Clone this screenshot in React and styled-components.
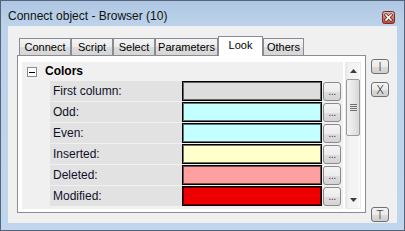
import React from 'react';
import styled, { createGlobalStyle } from 'styled-components';

const Global = createGlobalStyle`
  html, body { margin: 0; padding: 0; }
  body {
    width: 405px; height: 231px; overflow: hidden;
    font-family: "Liberation Sans", Arial, sans-serif;
    background: #fff;
  }
`;

const Window = styled.div`
  width: 405px;
  height: 231px;
  box-sizing: border-box;
  border: 1px solid #56647a;
  background: linear-gradient(180deg, #adc6e2 0px, #bcd2ea 22px, #c0d6ec 100%);
  display: flex;
  flex-direction: column;
  padding: 0 7px 7px 7px;
`;

const TitleBar = styled.div`
  height: 25px;
  box-sizing: border-box;
  padding-top: 5px;
  display: flex;
  align-items: center;
  justify-content: space-between;
`;

const Title = styled.span`
  font-family: "Liberation Sans", Arial, sans-serif;
  font-size: 12px;
  color: #111;
`;

const CloseBox = styled.div`
  width: 13px;
  height: 13px;
  margin-right: 2px;
  margin-top: 2px;
  display: flex;
`;

const Client = styled.div`
  flex: 1;
  background: #f0f0f0;
  display: flex;
  padding: 10px 0 0 9px;
  box-sizing: border-box;
`;

const LeftCol = styled.div`
  width: 349px;
  display: flex;
  flex-direction: column;
`;

const TabStrip = styled.div`
  height: 19px;
  display: flex;
  align-items: flex-end;
  padding-left: 2px;
  position: relative;
  z-index: 2;
`;

const Tab = styled.div`
  width: ${p => p.$w}px;
  height: ${p => (p.$active ? 20 : 17)}px;
  margin-bottom: ${p => (p.$active ? -1 : 0)}px;
  box-sizing: border-box;
  border: 1px solid #898c95;
  border-bottom: none;
  background: ${p => (p.$active ? '#fff' : 'linear-gradient(180deg, #f3f3f3 0%, #ebebeb 50%, #dcdcdc 51%, #d6d6d6 100%)')};
  font-size: 11px;
  color: #000;
  display: flex;
  justify-content: center;
  align-items: ${p => (p.$active ? 'flex-start' : 'center')};
  padding-top: ${p => (p.$active ? 2 : 0)}px;
`;

const Panel = styled.div`
  height: 158px;
  box-sizing: border-box;
  border: 1px solid #898c95;
  background: #fff;
  padding: 6px 4px 3px 4px;
  display: flex;
`;

const PropList = styled.div`
  flex: 1;
  background: #f0f0f0;
  display: flex;
  flex-direction: column;
`;

const Header = styled.div`
  height: 18px;
  display: flex;
  align-items: center;
  padding-left: 5px;
`;

const MinusBox = styled.div`
  width: 10px;
  height: 10px;
  box-sizing: border-box;
  border: 1px solid #8c8c8c;
  background: #fff;
  display: flex;
  align-items: center;
  justify-content: center;
  margin-right: 8px;
  margin-top: 2px;
  &::after {
    content: '';
    width: 6px;
    height: 1px;
    background: #000;
  }
`;

const HeaderText = styled.span`
  font-weight: bold;
  font-size: 12px;
  color: #000;
`;

const Row = styled.div`
  height: 20px;
  margin-top: 1px;
  display: flex;
  align-items: stretch;
  padding-left: 28px;
`;

const Label = styled.div`
  width: 132px;
  box-sizing: border-box;
  background: #e2e2e2;
  font-size: 12px;
  color: #10102a;
  padding-left: 3px;
  display: flex;
  align-items: center;
`;

const Swatch = styled.div`
  width: 140px;
  box-sizing: border-box;
  border: 1px solid #000;
  box-shadow: inset 0 0 0 1px rgba(0, 0, 0, 0.55);
  background: ${p => p.$color};
`;

const DotButton = styled.div`
  width: 18px;
  height: 19px;
  margin-left: 1px;
  align-self: center;
  box-sizing: border-box;
  border: 1px solid #8a8a8a;
  border-radius: 3px;
  background: linear-gradient(180deg, #f4f4f4 0%, #ececec 50%, #dedede 51%, #d4d4d4 100%);
  display: flex;
  justify-content: center;
  align-items: flex-end;
  font-size: 11px;
  line-height: 11px;
  letter-spacing: -0.5px;
  color: #6a2a6a;
  padding-bottom: 3px;
`;

const Scrollbar = styled.div`
  width: 16px;
  margin-left: 2px;
  box-sizing: border-box;
  background: linear-gradient(90deg, #e6e6e6 0%, #f3f3f3 20%, #f3f3f3 80%, #fcfcfc 100%);
  border: 1px solid #eaeaea;
  display: flex;
  flex-direction: column;
`;

const ArrowBtn = styled.div`
  height: 16px;
  display: flex;
  align-items: center;
  justify-content: center;
`;

const Thumb = styled.div`
  height: 57px;
  box-sizing: border-box;
  border: 1px solid #9a9a9a;
  border-radius: 2px;
  background: linear-gradient(90deg, #f2f2f2 0%, #e8e8e8 50%, #d8d8d8 100%);
  display: flex;
  align-items: center;
  justify-content: center;
`;

const Track = styled.div`
  flex: 1;
`;

const RightCol = styled.div`
  width: 18px;
  margin-left: 5px;
  display: flex;
  flex-direction: column;
  padding-top: 23px;
  padding-bottom: 1px;
  box-sizing: border-box;
  gap: 8px;
`;

const SideButton = styled.div`
  width: 18px;
  height: 15px;
  box-sizing: border-box;
  border: 1px solid #707070;
  border-radius: 3px;
  background: linear-gradient(180deg, #f2f2f2 0%, #ebebeb 50%, #dddddd 51%, #cfcfcf 100%);
  display: flex;
  align-items: center;
  justify-content: center;
  font-family: "DejaVu Sans", sans-serif;
  font-size: 12px;
  font-weight: 200;
  color: #000;
  margin-top: ${p => (p.$bottom ? 'auto' : '0')};
`;

const tabs = [
  { t: 'Connect', w: 52 },
  { t: 'Script', w: 42 },
  { t: 'Select', w: 42 },
  { t: 'Parameters', w: 63 },
  { t: 'Look', w: 45, active: true },
  { t: 'Others', w: 41 },
];

const rows = [
  { label: 'First column:', color: '#dddddd' },
  { label: 'Odd:', color: '#c4ffff' },
  { label: 'Even:', color: '#c4ffff' },
  { label: 'Inserted:', color: '#ffffcc' },
  { label: 'Deleted:', color: '#ffa0a0' },
  { label: 'Modified:', color: '#ef0000' },
];

function CloseIcon() {
  return (
    <svg width="13" height="13" viewBox="0 0 13 13">
      <defs>
        <linearGradient id="cg" x1="0" y1="0" x2="0" y2="1">
          <stop offset="0" stopColor="#e8b1a4" />
          <stop offset="0.5" stopColor="#d37a68" />
          <stop offset="1" stopColor="#c0463a" />
        </linearGradient>
      </defs>
      <rect x="0.5" y="0.5" width="12" height="12" rx="2" fill="url(#cg)" stroke="#7a2b25" />
      <path d="M4 4 L9 9 M9 4 L4 9" stroke="#5a1d18" strokeWidth="3" strokeLinecap="square" />
      <path d="M4 4 L9 9 M9 4 L4 9" stroke="#fff" strokeWidth="1.6" strokeLinecap="square" />
    </svg>
  );
}

function UpArrow() {
  return (
    <svg width="7" height="4" viewBox="0 0 7 4">
      <path d="M3.5 0 L7 4 L0 4 Z" fill="#3c3c3c" />
    </svg>
  );
}

function DownArrow() {
  return (
    <svg width="7" height="4" viewBox="0 0 7 4">
      <path d="M0 0 L7 0 L3.5 4 Z" fill="#3c3c3c" />
    </svg>
  );
}

function Grip() {
  return (
    <svg width="7" height="8" viewBox="0 0 7 8">
      {[0, 2, 4, 6].map(y => (
        <rect key={y} x="0" y={y} width="7" height="1" fill="#6f6f6f" />
      ))}
    </svg>
  );
}

export default function App() {
  return (
    <>
      <Global />
      <Window>
        <TitleBar>
          <Title>Connect object - Browser (10)</Title>
          <CloseBox><CloseIcon /></CloseBox>
        </TitleBar>
        <Client>
          <LeftCol>
            <TabStrip>
              {tabs.map(tb => (
                <Tab key={tb.t} $w={tb.w} $active={tb.active}>
                  {tb.t}
                </Tab>
              ))}
            </TabStrip>
            <Panel>
              <PropList>
                <Header>
                  <MinusBox />
                  <HeaderText>Colors</HeaderText>
                </Header>
                {rows.map(r => (
                  <Row key={r.label}>
                    <Label>{r.label}</Label>
                    <Swatch $color={r.color} />
                    <DotButton>...</DotButton>
                  </Row>
                ))}
              </PropList>
              <Scrollbar>
                <ArrowBtn><UpArrow /></ArrowBtn>
                <Thumb><Grip /></Thumb>
                <Track />
                <ArrowBtn><DownArrow /></ArrowBtn>
              </Scrollbar>
            </Panel>
          </LeftCol>
          <RightCol>
            <SideButton>I</SideButton>
            <SideButton>X</SideButton>
            <SideButton $bottom>T</SideButton>
          </RightCol>
        </Client>
      </Window>
    </>
  );
}
